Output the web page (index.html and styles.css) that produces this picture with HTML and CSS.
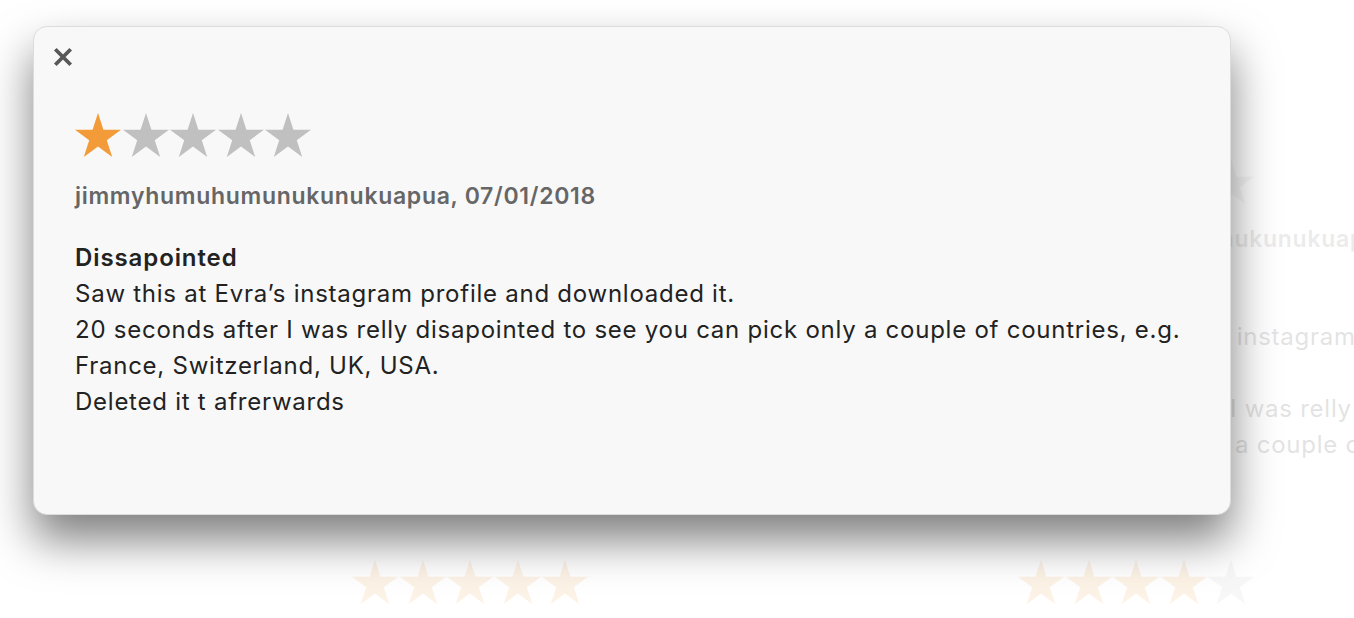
FILE: index.html
```html
<!DOCTYPE html>
<html>
<head>
<meta charset="utf-8">
<link rel="stylesheet" href="styles.css">
</head>
<body>
<div class="page">
  <div class="bg-row bg-row-top">
    <div class="bg-card">
      <div class="stars">
        <svg class="star on" viewBox="2.45 0 95.1 90.45"><polygon points="50,0 61.23,34.55 97.55,34.55 68.16,55.9 79.39,90.45 50,69.1 20.61,90.45 31.84,55.9 2.45,34.55 38.77,34.55"/></svg>
        <svg class="star on" viewBox="2.45 0 95.1 90.45"><polygon points="50,0 61.23,34.55 97.55,34.55 68.16,55.9 79.39,90.45 50,69.1 20.61,90.45 31.84,55.9 2.45,34.55 38.77,34.55"/></svg>
        <svg class="star on" viewBox="2.45 0 95.1 90.45"><polygon points="50,0 61.23,34.55 97.55,34.55 68.16,55.9 79.39,90.45 50,69.1 20.61,90.45 31.84,55.9 2.45,34.55 38.77,34.55"/></svg>
        <svg class="star on" viewBox="2.45 0 95.1 90.45"><polygon points="50,0 61.23,34.55 97.55,34.55 68.16,55.9 79.39,90.45 50,69.1 20.61,90.45 31.84,55.9 2.45,34.55 38.77,34.55"/></svg>
        <svg class="star on" viewBox="2.45 0 95.1 90.45"><polygon points="50,0 61.23,34.55 97.55,34.55 68.16,55.9 79.39,90.45 50,69.1 20.61,90.45 31.84,55.9 2.45,34.55 38.77,34.55"/></svg>
      </div>
      <div class="author">appleseed, 05/01/2018</div>
      <div class="title">Great app</div>
      <div class="body">Nice and simple.</div>
    </div>
    <div class="bg-card">
      <div class="stars">
        <svg class="star on" viewBox="2.45 0 95.1 90.45"><polygon points="50,0 61.23,34.55 97.55,34.55 68.16,55.9 79.39,90.45 50,69.1 20.61,90.45 31.84,55.9 2.45,34.55 38.77,34.55"/></svg>
        <svg class="star" viewBox="2.45 0 95.1 90.45"><polygon points="50,0 61.23,34.55 97.55,34.55 68.16,55.9 79.39,90.45 50,69.1 20.61,90.45 31.84,55.9 2.45,34.55 38.77,34.55"/></svg>
        <svg class="star" viewBox="2.45 0 95.1 90.45"><polygon points="50,0 61.23,34.55 97.55,34.55 68.16,55.9 79.39,90.45 50,69.1 20.61,90.45 31.84,55.9 2.45,34.55 38.77,34.55"/></svg>
        <svg class="star" viewBox="2.45 0 95.1 90.45"><polygon points="50,0 61.23,34.55 97.55,34.55 68.16,55.9 79.39,90.45 50,69.1 20.61,90.45 31.84,55.9 2.45,34.55 38.77,34.55"/></svg>
        <svg class="star" viewBox="2.45 0 95.1 90.45"><polygon points="50,0 61.23,34.55 97.55,34.55 68.16,55.9 79.39,90.45 50,69.1 20.61,90.45 31.84,55.9 2.45,34.55 38.77,34.55"/></svg>
      </div>
      <div class="author">jimmyhumuhumunukunukuapua, 07/01/2018</div>
      <div class="title">Dissapointed</div>
      <div class="body">
        <div class="line">Saw this at Evra’s instagram profile and downloaded it.</div>
        <div class="line">20 seconds after</div>
        <div class="line shift">I was relly disapointed to see</div>
        <div class="line shift2">a couple of countries, e.g.</div>
      </div>
    </div>
  </div>
  <div class="bg-row bg-row-bottom">
    <div class="bg-card">
      <div class="stars">
        <svg class="star on" viewBox="2.45 0 95.1 90.45"><polygon points="50,0 61.23,34.55 97.55,34.55 68.16,55.9 79.39,90.45 50,69.1 20.61,90.45 31.84,55.9 2.45,34.55 38.77,34.55"/></svg>
        <svg class="star on" viewBox="2.45 0 95.1 90.45"><polygon points="50,0 61.23,34.55 97.55,34.55 68.16,55.9 79.39,90.45 50,69.1 20.61,90.45 31.84,55.9 2.45,34.55 38.77,34.55"/></svg>
        <svg class="star on" viewBox="2.45 0 95.1 90.45"><polygon points="50,0 61.23,34.55 97.55,34.55 68.16,55.9 79.39,90.45 50,69.1 20.61,90.45 31.84,55.9 2.45,34.55 38.77,34.55"/></svg>
        <svg class="star on" viewBox="2.45 0 95.1 90.45"><polygon points="50,0 61.23,34.55 97.55,34.55 68.16,55.9 79.39,90.45 50,69.1 20.61,90.45 31.84,55.9 2.45,34.55 38.77,34.55"/></svg>
        <svg class="star on" viewBox="2.45 0 95.1 90.45"><polygon points="50,0 61.23,34.55 97.55,34.55 68.16,55.9 79.39,90.45 50,69.1 20.61,90.45 31.84,55.9 2.45,34.55 38.77,34.55"/></svg>
      </div>
    </div>
    <div class="bg-card">
      <div class="stars">
        <svg class="star on" viewBox="2.45 0 95.1 90.45"><polygon points="50,0 61.23,34.55 97.55,34.55 68.16,55.9 79.39,90.45 50,69.1 20.61,90.45 31.84,55.9 2.45,34.55 38.77,34.55"/></svg>
        <svg class="star on" viewBox="2.45 0 95.1 90.45"><polygon points="50,0 61.23,34.55 97.55,34.55 68.16,55.9 79.39,90.45 50,69.1 20.61,90.45 31.84,55.9 2.45,34.55 38.77,34.55"/></svg>
        <svg class="star on" viewBox="2.45 0 95.1 90.45"><polygon points="50,0 61.23,34.55 97.55,34.55 68.16,55.9 79.39,90.45 50,69.1 20.61,90.45 31.84,55.9 2.45,34.55 38.77,34.55"/></svg>
        <svg class="star on" viewBox="2.45 0 95.1 90.45"><polygon points="50,0 61.23,34.55 97.55,34.55 68.16,55.9 79.39,90.45 50,69.1 20.61,90.45 31.84,55.9 2.45,34.55 38.77,34.55"/></svg>
        <svg class="star" viewBox="2.45 0 95.1 90.45"><polygon points="50,0 61.23,34.55 97.55,34.55 68.16,55.9 79.39,90.45 50,69.1 20.61,90.45 31.84,55.9 2.45,34.55 38.77,34.55"/></svg>
      </div>
    </div>
  </div>

  <div class="dialog">
    <button class="close" aria-label="Close">
      <svg viewBox="0 0 20 20"><path d="M3 3 L17 17 M17 3 L3 17"/></svg>
    </button>
    <div class="content">
      <div class="stars">
        <svg class="star on" viewBox="2.45 0 95.1 90.45"><polygon points="50,0 61.23,34.55 97.55,34.55 68.16,55.9 79.39,90.45 50,69.1 20.61,90.45 31.84,55.9 2.45,34.55 38.77,34.55"/></svg>
        <svg class="star" viewBox="2.45 0 95.1 90.45"><polygon points="50,0 61.23,34.55 97.55,34.55 68.16,55.9 79.39,90.45 50,69.1 20.61,90.45 31.84,55.9 2.45,34.55 38.77,34.55"/></svg>
        <svg class="star" viewBox="2.45 0 95.1 90.45"><polygon points="50,0 61.23,34.55 97.55,34.55 68.16,55.9 79.39,90.45 50,69.1 20.61,90.45 31.84,55.9 2.45,34.55 38.77,34.55"/></svg>
        <svg class="star" viewBox="2.45 0 95.1 90.45"><polygon points="50,0 61.23,34.55 97.55,34.55 68.16,55.9 79.39,90.45 50,69.1 20.61,90.45 31.84,55.9 2.45,34.55 38.77,34.55"/></svg>
        <svg class="star" viewBox="2.45 0 95.1 90.45"><polygon points="50,0 61.23,34.55 97.55,34.55 68.16,55.9 79.39,90.45 50,69.1 20.61,90.45 31.84,55.9 2.45,34.55 38.77,34.55"/></svg>
      </div>
      <div class="author">jimmyhumuhumunukunukuapua, 07/01/2018</div>
      <div class="title">Dissapointed</div>
      <div class="body">
        <div class="line">Saw this at Evra’s instagram profile and downloaded it.</div>
        <div class="line">20 seconds after I was relly disapointed to see you can pick only a couple of countries, e.g.</div>
        <div class="line">France, Switzerland, UK, USA.</div>
        <div class="line">Deleted it t afrerwards</div>
      </div>
    </div>
  </div>
</div>
</body>
</html>
```

FILE: styles.css
```css
html, body {
  margin: 0;
  padding: 0;
  background: #ffffff;
  overflow: hidden;
}

.page {
  position: relative;
  width: 1354px;
  height: 618px;
  overflow: hidden;
  font-family: "Inter", "Liberation Sans", sans-serif;
  color: #222;
}

/* faded review grid behind the sheet */
.bg-row {
  display: flex;
  gap: 46px;
  padding-left: 352px;
  opacity: 0.12;
  box-sizing: border-box;
}
.bg-row-top {
  padding-top: 160px;
  height: 400px;
}
.bg-row-bottom {
  padding-top: 160px;
  height: 218px;
}
.bg-card {
  flex: 0 0 620px;
  white-space: nowrap;
}
.bg-card .author {
  margin-top: 20px;
}
.shift { padding-left: 212px; }
.shift2 { padding-left: 217px; }

.stars {
  display: flex;
  gap: 1.6px;
  height: 45px;
}
.star {
  width: 46px;
  height: 44px;
  fill: #c0c0c0;
  display: block;
}
.star.on {
  fill: #f29b38;
}

.author {
  margin-top: 24px;
  font-size: 23px;
  font-weight: 600;
  letter-spacing: 0.7px;
  color: #666;
  line-height: 28px;
}
.title {
  margin-top: 34px;
  font-size: 24px;
  font-weight: 600;
  letter-spacing: 0.9px;
  color: #222;
  line-height: 28px;
}
.body {
  margin-top: 4px;
  font-size: 24px;
  letter-spacing: 0.75px;
  line-height: 36px;
  color: #222;
}

/* sheet */
.dialog {
  position: absolute;
  left: 33px;
  top: 26px;
  width: 1198px;
  height: 489px;
  box-sizing: border-box;
  background: #f8f8f8;
  border: 1px solid #dcdcdc;
  border-radius: 14px;
  box-shadow: 0 25px 45px rgba(0, 0, 0, 0.5);
}
.close {
  position: absolute;
  left: 18px;
  top: 19px;
  width: 22px;
  height: 22px;
  padding: 0;
  border: 0;
  background: transparent;
}
.close svg {
  width: 22px;
  height: 22px;
  display: block;
  stroke: #585858;
  stroke-width: 3.4;
  stroke-linecap: butt;
  fill: none;
}
.content {
  padding: 86px 0 0 41px;
}
```
